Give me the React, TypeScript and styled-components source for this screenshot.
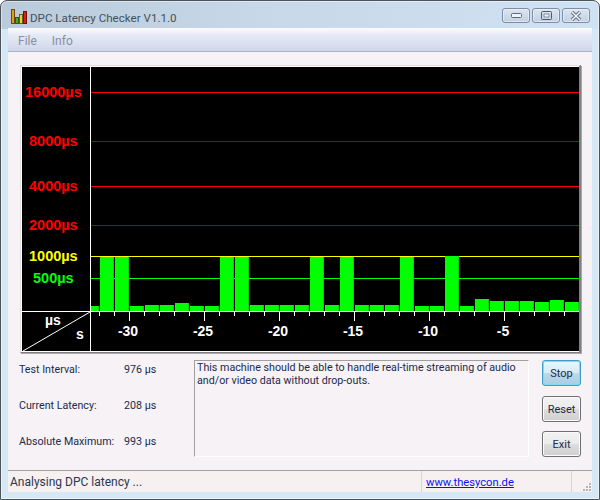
import React from "react";
import styled, { createGlobalStyle } from "styled-components";

const Global = createGlobalStyle`
  html, body { margin: 0; padding: 0; background: #fff; }
  body { width: 600px; height: 500px; overflow: hidden; }
`;

const uiFont = `Roboto, "Noto Sans", sans-serif`;

const Win = styled.div`
  width: 600px;
  height: 500px;
  box-sizing: border-box;
  border: 1px solid #4d5359;
  border-radius: 7px 7px 0 0;
  padding: 0 7px 7px;
  display: flex;
  flex-direction: column;
  background:
    linear-gradient(100deg, #b9cadb 0%, #c7d8e8 45%, #cfe2f3 100%) top / 100% 28px no-repeat,
    #d6e7f6;
  box-shadow: inset 0 0 0 1px rgba(255, 255, 255, 0.45);
  font-family: ${uiFont};
  color: #1c2a4a;
`;

const TitleBar = styled.div`
  height: 27px;
  flex: none;
  box-sizing: border-box;
  padding: 5px 2px 0 3px;
  display: flex;
  align-items: center;
  gap: 3px;
`;

const TitleText = styled.span`
  font-size: 11.6px;
  line-height: 16px;
  padding-top: 2px;
  color: #45505c;
`;

const WinButtons = styled.div`
  margin-left: auto;
  margin-top: -3px;
  display: flex;
  gap: 2px;
`;

const WinBtn = styled.div`
  width: 26px;
  height: 13px;
  border: 1px solid #7b8da8;
  border-radius: 3px;
  background: linear-gradient(#dbe5f0, #c2d0e2);
  box-shadow: inset 0 0 0 1px rgba(255, 255, 255, 0.45);
  display: flex;
  align-items: center;
  justify-content: center;
`;

const Client = styled.div`
  flex: 1;
  min-height: 0;
  display: flex;
  flex-direction: column;
  background: #f6f2f6;
`;

const MenuBar = styled.div`
  height: 24px;
  flex: none;
  box-sizing: border-box;
  border-bottom: 1px solid #aab4cc;
  background: linear-gradient(#fbfcfe 0%, #e6eaf6 30%, #d0d7eb 100%);
  display: flex;
  align-items: center;
  gap: 15px;
  padding: 3px 0 0 10px;
  font-size: 12px;
  color: #8a8f9e;
`;

const Body = styled.div`
  flex: 1;
  min-height: 0;
  display: flex;
  flex-direction: column;
  padding: 13px 10px 0 12px;
`;

const ChartFrame = styled.div`
  flex: none;
  width: 557px;
  border: 1px solid;
  border-right-width: 2px;
  border-color: #e2dee2 #808080 #808080 #e2dee2;
  background: #fff;
  padding: 1px 0 1px 1px;
  box-shadow: 1px 1px 0 #a8a8a8;
`;

const ChartSvg = styled.svg`
  display: block;
  background: #000;
  font-family: "Liberation Sans", Arial, sans-serif;
  font-weight: 700;
`;

const InfoRow = styled.div`
  display: flex;
  margin-top: 7px;
  height: 100px;
`;

const Stats = styled.div`
  width: 174px;
  flex: none;
  display: flex;
  flex-direction: column;
  gap: 20px;
  padding-top: 2px;
`;

const StatRow = styled.div`
  display: grid;
  grid-template-columns: 105px 1fr;
  height: 16px;
  line-height: 16px;
  font-size: 10.7px;
  margin-left: -1px;
`;

const MessageBox = styled.div`
  width: 335px;
  height: 97px;
  box-sizing: border-box;
  flex: none;
  border: 1px solid;
  border-color: #a0a0a0 #fff #fff #a0a0a0;
  padding: 0 2px;
  font-size: 10.7px;
  line-height: 13px;
`;

const Buttons = styled.div`
  margin-left: 13px;
  display: flex;
  flex-direction: column;
  gap: 9px;
`;

const Btn = styled.div<{ $focus?: boolean; $shift?: boolean }>`
  width: 39px;
  height: 26px;
  box-sizing: border-box;
  margin-top: ${(p) => (p.$shift ? "1px" : "0")};
  border: 1px solid ${(p) => (p.$focus ? "#3c9fc9" : "#707070")};
  border-radius: 3px;
  display: flex;
  align-items: center;
  justify-content: center;
  font-size: 11px;
  color: #1c2a4a;
  background: ${(p) =>
    p.$focus
      ? "linear-gradient(#eaf6fb 0%, #d9ebf5 48%, #bcd9ea 52%, #a8cde2 100%)"
      : "linear-gradient(#f2f2f2 0%, #ebebeb 48%, #dddddd 52%, #cfcfcf 100%)"};
  box-shadow: inset 0 0 0 1px ${(p) => (p.$focus ? "#7fdcf6" : "#fbfbfb")};
`;

const StatusBar = styled.div`
  margin-top: auto;
  flex: none;
  height: 22px;
  box-sizing: border-box;
  border-top: 1px solid #a0a0a0;
  background: #f6f0f0;
  display: flex;
  font-size: 12px;
  line-height: 23px;
`;

const StatusMain = styled.div`
  width: 414px;
  flex: none;
  box-sizing: border-box;
  padding-left: 2px;
  border-right: 1px solid #d9d5d5;
  color: #2b3650;
`;

const StatusLink = styled.a`
  width: 150px;
  flex: none;
  box-sizing: border-box;
  padding-left: 4px;
  border-right: 1px solid #d9d5d5;
  color: #1010ee;
  text-decoration: underline;
  font-size: 11.2px;
`;

const Grip = styled.svg`
  margin-left: auto;
  align-self: flex-end;
`;

const lines = [
  { y: 92, c: "#ff0000", label: "16000µs", x: 25 },
  { y: 141, c: "#a00000", label: "8000µs", x: 29 },
  { y: 186, c: "#ff0000", label: "4000µs", x: 29 },
  { y: 225, c: "#a00000", label: "2000µs", x: 29 },
  { y: 256, c: "#ffff00", label: "1000µs", x: 29 },
  { y: 278, c: "#00ff00", label: "500µs", x: 33 },
];
const labelColor = (l: { y: number; c: string }) =>
  l.y === 141 || l.y === 225 ? "#ff0000" : l.c;

// Bar tops in page pixels, left to right.
const tops = [
  306, 257, 257, 306, 305, 305, 303, 306, 306, 257, 257, 305, 305, 305, 305,
  257, 305, 257, 305, 305, 305, 257, 306, 306, 256, 306, 299, 301, 301, 301,
  302, 300, 302,
];

const OX = 22;
const OY = 67;
const RIGHT = 579;

function Chart() {
  const ticks: number[] = [];
  for (let x = 99; x < RIGHT; x += 15) ticks.push(x);
  const majors = [
    { x: 129, t: "-30" },
    { x: 204, t: "-25" },
    { x: 279, t: "-20" },
    { x: 354, t: "-15" },
    { x: 429, t: "-10" },
    { x: 504, t: "-5" },
  ];
  return (
    <ChartSvg width={557} height={284} viewBox={`${OX} ${OY} 557 284`} shapeRendering="crispEdges">
      {lines.map((l) => (
        <rect key={l.y} x={91} y={l.y} width={RIGHT - 91} height={1} fill={l.c} />
      ))}
      {lines.map((l) => (
        <text key={l.label} x={l.x} y={l.y + 5} fontSize={14.5} fill={labelColor(l)}>
          {l.label}
        </text>
      ))}
      {tops.map((t, i) => {
        const x = i === 0 ? 91 : 100 + (i - 1) * 15;
        const w = i === 0 ? 8 : 14;
        return (
          <g key={i}>
            <rect x={x} y={t} width={w} height={311 - t} fill="#00ff00" />
            <rect x={x + w - 1} y={t} width={1} height={311 - t} fill="#00d800" />
          </g>
        );
      })}
      <rect x={90} y={67} width={1} height={284} fill="#fff" />
      <rect x={22} y={311} width={557} height={1} fill="#fff" />
      {ticks.map((x) => (
        <rect key={x} x={x} y={312} width={1} height={(x - 129) % 75 === 0 ? 9 : 4} fill="#fff" />
      ))}
      {majors.map((m) => (
        <text key={m.t} x={m.x - 1} y={336} fontSize={14} fill="#fff" textAnchor="middle">
          {m.t}
        </text>
      ))}
      <line x1={23} y1={351} x2={90} y2={312} stroke="#fff" strokeWidth={1} shapeRendering="auto" />
      <text x={45} y={325} fontSize={14} fill="#fff">µs</text>
      <text x={76} y={339} fontSize={14} fill="#fff">s</text>
    </ChartSvg>
  );
}

function AppIcon() {
  return (
    <svg width="16" height="16" viewBox="0 0 16 16" shapeRendering="crispEdges">
      <rect x="0.5" y="0.5" width="3" height="14" fill="#e89a1a" stroke="#6b4a10" />
      <rect x="4.5" y="8.5" width="3" height="6" fill="#3fae2a" stroke="#2b5a20" />
      <rect x="8.5" y="5.5" width="3" height="9" fill="#e8d820" stroke="#6b6010" />
      <rect x="12.5" y="2.5" width="3" height="12" fill="#d82018" stroke="#6a1010" />
    </svg>
  );
}

export default function App() {
  return (
    <Win>
      <Global />
      <TitleBar>
        <AppIcon />
        <TitleText>DPC Latency Checker V1.1.0</TitleText>
        <WinButtons>
          <WinBtn>
            <svg width="11" height="5" viewBox="0 0 11 5">
              <rect x="0.5" y="0.5" width="10" height="4" rx="1" fill="#f0f4f8" stroke="#5a6a80" />
            </svg>
          </WinBtn>
          <WinBtn>
            <svg width="11" height="9" viewBox="0 0 11 9">
              <rect x="0.5" y="0.5" width="10" height="8" rx="1" fill="none" stroke="#4a5a70" />
              <rect x="3" y="3" width="5" height="3" fill="#f0f4f8" stroke="#4a5a70" strokeWidth="0.6" />
            </svg>
          </WinBtn>
          <WinBtn>
            <svg width="12" height="10" viewBox="0 0 12 10">
              <path d="M2 1 L10 9 M10 1 L2 9" stroke="#5a6a80" strokeWidth="3.4" />
              <path d="M2 1 L10 9 M10 1 L2 9" stroke="#f4f6fa" strokeWidth="1.6" />
            </svg>
          </WinBtn>
        </WinButtons>
      </TitleBar>
      <Client>
        <MenuBar>
          <span>File</span>
          <span>Info</span>
        </MenuBar>
        <Body>
          <ChartFrame>
            <Chart />
          </ChartFrame>
          <InfoRow>
            <Stats>
              <StatRow><span>Test Interval:</span><span>976 µs</span></StatRow>
              <StatRow><span>Current Latency:</span><span>208 µs</span></StatRow>
              <StatRow><span>Absolute Maximum:</span><span>993 µs</span></StatRow>
            </Stats>
            <MessageBox>
              This machine should be able to handle real-time streaming of audio and/or video data without drop-outs.
            </MessageBox>
            <Buttons>
              <Btn $focus>Stop</Btn>
              <Btn $shift>Reset</Btn>
              <Btn>Exit</Btn>
            </Buttons>
          </InfoRow>
        </Body>
        <StatusBar>
          <StatusMain>Analysing DPC latency ...</StatusMain>
          <StatusLink href="#">www.thesycon.de</StatusLink>
          <Grip width="9" height="9" viewBox="0 0 9 9">
            <g fill="#b4b4b4">
              <rect x="6" y="0" width="2" height="2" />
              <rect x="3" y="3" width="2" height="2" />
              <rect x="6" y="3" width="2" height="2" />
              <rect x="0" y="6" width="2" height="2" />
              <rect x="3" y="6" width="2" height="2" />
              <rect x="6" y="6" width="2" height="2" />
            </g>
          </Grip>
        </StatusBar>
      </Client>
    </Win>
  );
}
